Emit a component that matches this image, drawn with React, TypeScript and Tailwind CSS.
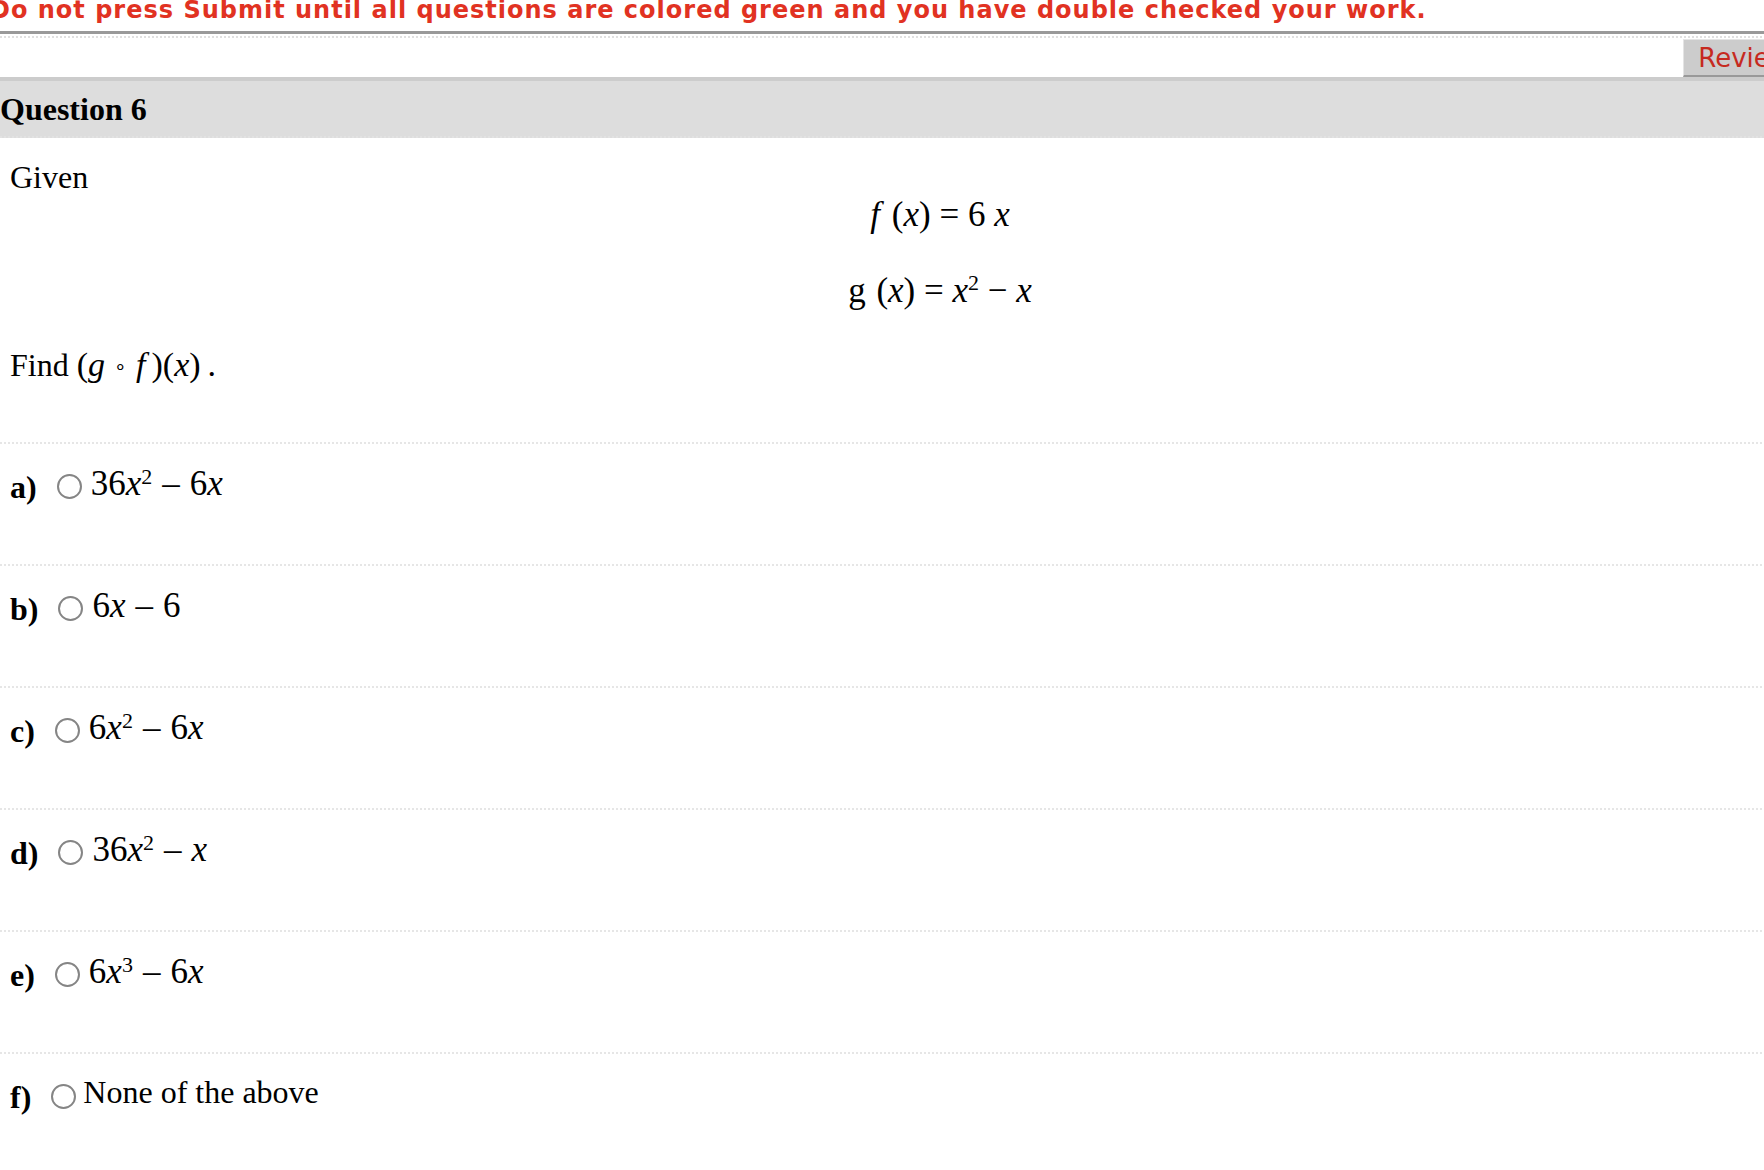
const serif = "font-['Liberation_Serif','Times_New_Roman',serif]";

type Choice = { key: string; body: React.ReactNode; plain?: boolean };

const Dash = () => <span className="mx-[10px]">–</span>;

const Sup = ({ n }: { n: string }) => <sup className="text-[22px] relative -top-[11px]">{n}</sup>;

const choices: Choice[] = [
  {
    key: "a)",
    body: (
      <>
        36<i>x</i>
        <Sup n="2" />
        <Dash />6<i>x</i>
      </>
    ),
  },
  {
    key: "b)",
    body: (
      <>
        6<i>x</i>
        <Dash />6
      </>
    ),
  },
  {
    key: "c)",
    body: (
      <>
        6<i>x</i>
        <Sup n="2" />
        <Dash />6<i>x</i>
      </>
    ),
  },
  {
    key: "d)",
    body: (
      <>
        36<i>x</i>
        <Sup n="2" />
        <Dash />
        <i>x</i>
      </>
    ),
  },
  {
    key: "e)",
    body: (
      <>
        6<i>x</i>
        <Sup n="3" />
        <Dash />6<i>x</i>
      </>
    ),
  },
  { key: "f)", body: "None of the above", plain: true },
];

const ChoiceRow = ({ c }: { c: Choice }) => (
  <div className="h-[122px] border-t-2 border-dotted border-[#e6e6e6] flex items-start pl-[10px]">
    <span className={`${serif} font-bold text-[32px] leading-[32px] mt-[27px] text-black`}>{c.key}</span>
    <input
      type="radio"
      name="q6"
      className="appearance-none w-[25px] h-[25px] rounded-full border-2 border-[#858585] bg-white ml-[20px] mt-[30px] shrink-0"
    />
    {c.plain ? (
      <span className={`${serif} text-[32px] leading-[32px] ml-[7px] mt-[22px] text-black`}>{c.body}</span>
    ) : (
      <span className={`${serif} text-[35px] leading-[35px] ml-[9px] mt-[22px] text-black whitespace-nowrap`}>
        {c.body}
      </span>
    )}
  </div>
);

export default function App() {
  return (
    <div className="w-[1764px] h-[1170px] overflow-hidden bg-white">
      <div className="w-[1870px]">
        <div className="h-[31px] overflow-hidden">
          <p className="font-['DejaVu_Sans',Verdana,sans-serif] font-bold text-[24px] leading-[24px] tracking-[1px] text-[#e13222] -ml-[10px] -mt-[2px] whitespace-nowrap">
            Do not press Submit until all questions are colored green and you have double checked your work.
          </p>
        </div>
        <div className="h-[3px] bg-[#999999]" />
        <div className="mt-[2px] border-t-2 border-dotted border-[#e0e0e0]" />
        <div className="h-[39px] flex justify-end">
          <button className="mt-[1px] h-[38px] bg-[#cccccc] border-l border-t border-[#e4e4e4] border-b-2 border-b-[#999999] pl-[14px] pr-[14px] mr-[65px] font-['DejaVu_Sans',Verdana,sans-serif] text-[26px] leading-[34px] text-[#c62a1f]">
            Review
          </button>
        </div>
        <div className="h-[4px] bg-[#cccccc]" />
        <div className={`${serif} h-[57px] bg-[#dddddd] border-b-2 border-dotted border-[#e2e2e2] font-bold text-[32px] leading-[57px] text-black`}>
          Question 6
        </div>

        <div className={`${serif} text-black pl-[10px]`}>
          <p className="text-[32px] leading-[36px] mt-[21px]">Given</p>
          <div className="flex flex-col items-center text-[35px] leading-[36px]">
            <p className="mt-[2px] whitespace-pre">
              <i>f</i>
              <span className="ml-[3px]"> (</span>
              <i>x</i>) = 6 <i>x</i>
            </p>
            <p className="mt-[40px] whitespace-pre">
              g<span className="ml-[2px]"> (</span>
              <i>x</i>) = <i>x</i>
              <sup className="text-[22px] relative -top-[12px]">2</sup> − <i>x</i>
            </p>
          </div>
          <p className="text-[32px] leading-[36px] mt-[38px] whitespace-nowrap">
            Find{" "}
            <span className="text-[34px]">
              (<i>g</i>
              <span className="mx-[9px] text-[20px] relative -top-[2px]">∘</span>
              <i>f</i>
              <span className="ml-[6px]">)(</span>
              <i>x</i>)<span className="ml-[7px]">.</span>
            </span>
          </p>
        </div>

        <div className="mt-[55px]">
          {choices.map((c) => (
            <ChoiceRow key={c.key} c={c} />
          ))}
        </div>
      </div>
    </div>
  );
}
